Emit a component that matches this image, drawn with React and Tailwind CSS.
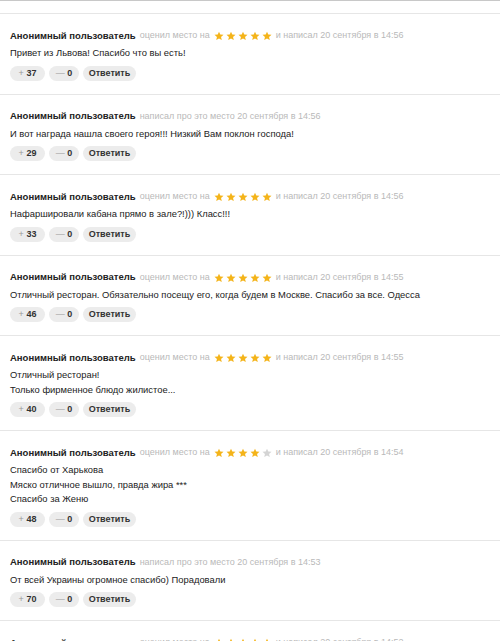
const reviews = [
  { votes: 37, rating: 5, time: "14:56", lines: ["Привет из Львова! Спасибо что вы есть!"] },
  { votes: 29, rating: 0, time: "14:56", lines: ["И вот награда нашла своего героя!!! Низкий Вам поклон господа!"] },
  { votes: 33, rating: 5, time: "14:56", lines: ["Нафаршировали кабана прямо в зале?!))) Класс!!!"] },
  { votes: 46, rating: 5, time: "14:55", lines: ["Отличный ресторан. Обязательно посещу его, когда будем в Москве. Спасибо за все. Одесса"] },
  { votes: 40, rating: 5, time: "14:55", lines: ["Отличный ресторан!", "Только фирменное блюдо жилистое..."] },
  { votes: 48, rating: 4, time: "14:54", lines: ["Спасибо от Харькова", "Мяско отличное вышло, правда жира ***", "Спасибо за Женю"] },
  { votes: 70, rating: 0, time: "14:53", lines: ["От всей Украины огромное спасибо) Порадовали"] },
  { votes: 12, rating: 5, time: "14:52", lines: ["Спасибо!"] },
];

function Star({ filled }) {
  return (
    <svg width="10" height="10" viewBox="0 0 24 24" className="inline-block">
      <path
        d="M12 1.5l3.1 7.1 7.7.6-5.9 5 1.8 7.5L12 17.7l-6.7 4 1.8-7.5-5.9-5 7.7-.6z"
        fill={filled ? "#f4b41a" : "#d4d4d4"}
      />
    </svg>
  );
}

function Review({ review }) {
  return (
    <div className="border-t border-[#e6e6e6] pl-[10px] pr-3 pt-[14px] pb-[13px]">
      <div className="flex h-4 items-center whitespace-nowrap">
        <span className="text-[9.5px] font-bold text-[#222]">Анонимный пользователь</span>
        {review.rating > 0 ? (
          <span className="ml-[4px] flex items-center text-[9px] text-[#b9b9b9]">
            <span>оценил место на</span>
            <span className="ml-[4px] mr-[4px] flex items-center gap-[2px]">
              {[1, 2, 3, 4, 5].map((n) => (
                <Star key={n} filled={n <= review.rating} />
              ))}
            </span>
            <span>и написал 20 сентября в {review.time}</span>
          </span>
        ) : (
          <span className="ml-[4px] text-[9px] text-[#b9b9b9]">
            написал про это место 20 сентября в {review.time}
          </span>
        )}
      </div>
      <div className="mt-[2px] text-[9.4px] leading-[14.5px] text-[#222]">
        {review.lines.map((line, i) => (
          <p key={i}>{line}</p>
        ))}
      </div>
      <div className="mt-[5px] flex gap-1 text-[9px] font-bold leading-[15px]">
        <span className="h-[15px] w-[35px] rounded-full bg-[#ececec] text-center text-[#333]">
          <span className="font-normal text-[#999]">+</span> {review.votes}
        </span>
        <span className="h-[15px] w-[30px] rounded-full bg-[#ececec] text-center text-[#333]">
          <span className="font-normal text-[#999]">—</span> 0
        </span>
        <span className="h-[15px] w-[53px] rounded-full bg-[#ececec] text-center text-[#333]">
          Ответить
        </span>
      </div>
    </div>
  );
}

export default function App() {
  return (
    <div
      className="h-[641px] overflow-hidden border-t border-[#c8c8c8] bg-white pt-3"
      style={{ fontFamily: '"Liberation Sans", Arial, sans-serif' }}
    >
      {reviews.map((review, i) => (
        <Review key={i} review={review} />
      ))}
    </div>
  );
}
